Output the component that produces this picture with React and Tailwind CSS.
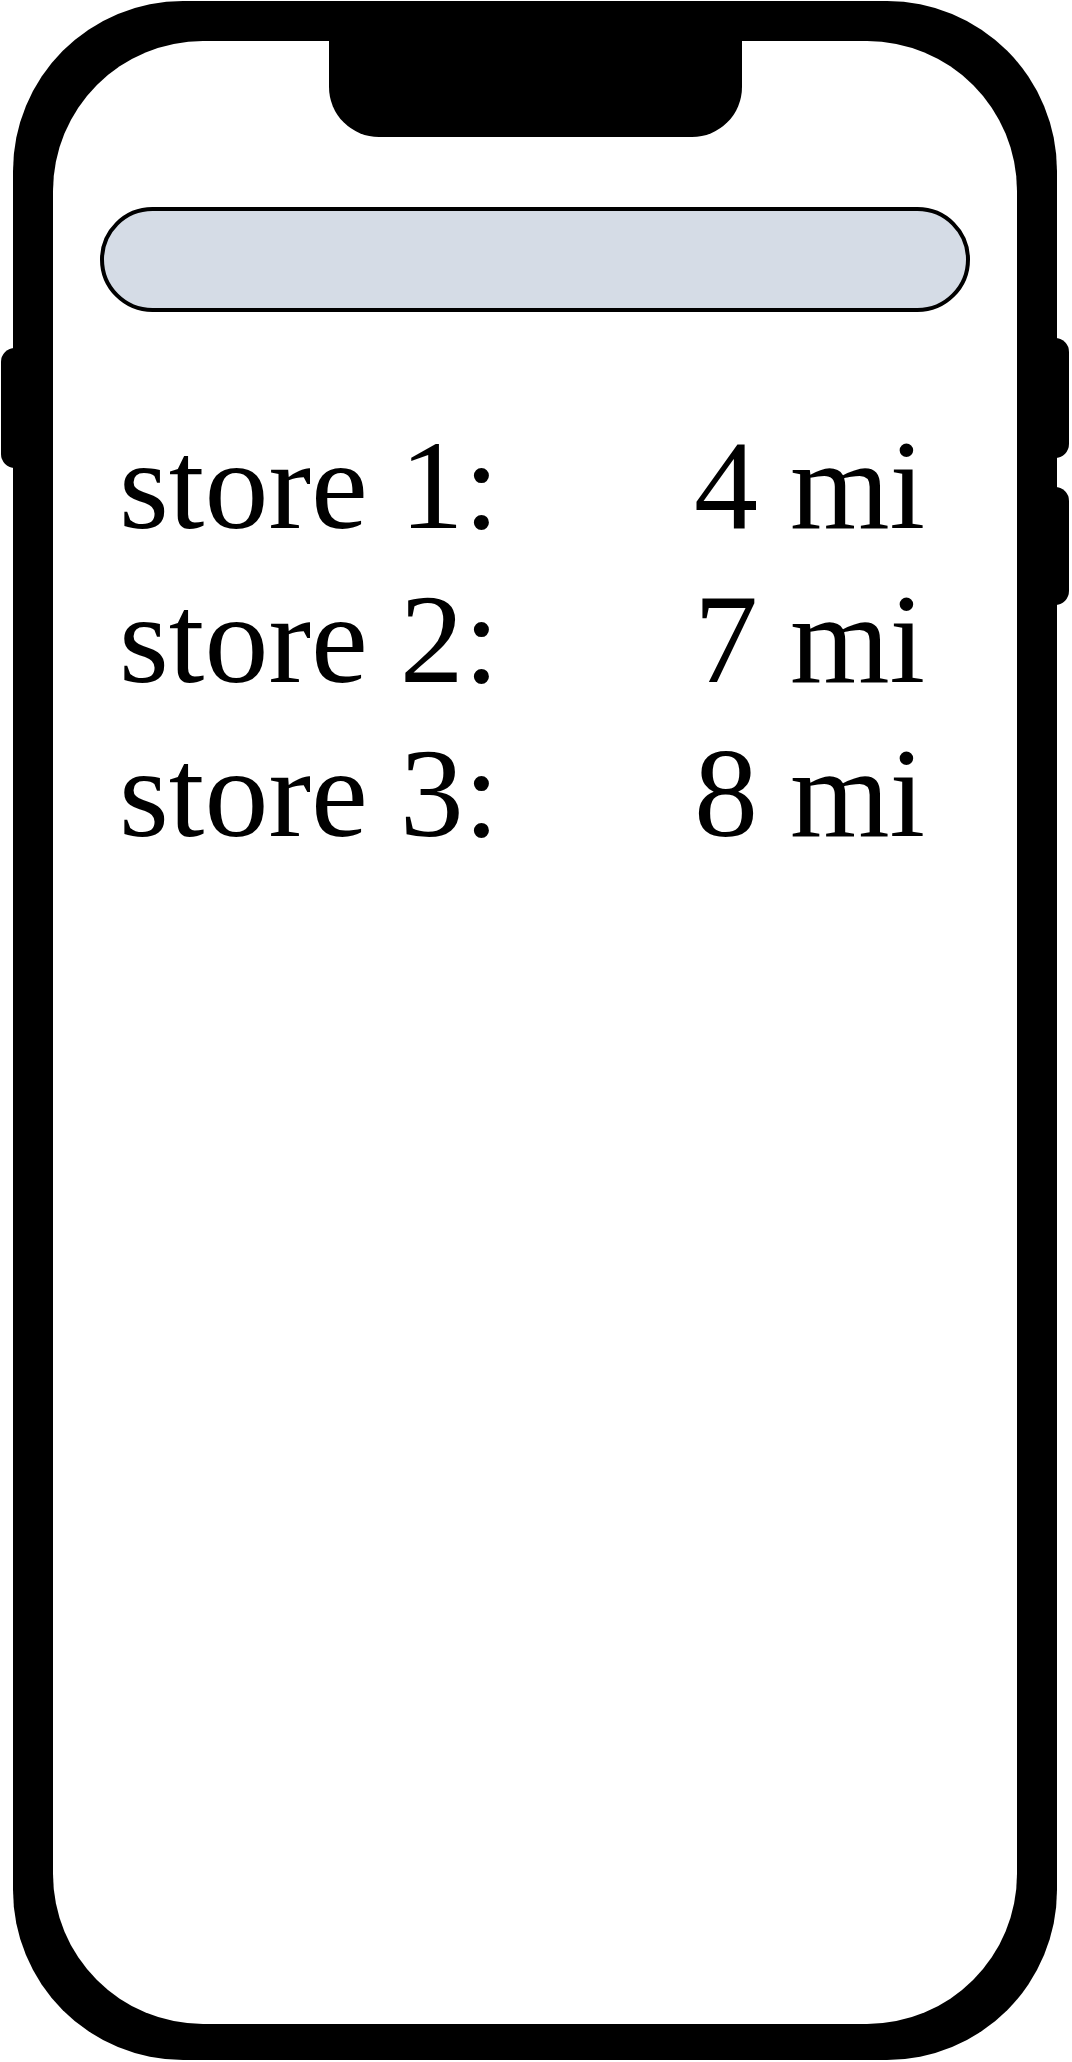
import React from "react";

const rows = [
  { name: "store 1:", dist: "4 mi" },
  { name: "store 2:", dist: "7 mi" },
  { name: "store 3:", dist: "8 mi" },
];

export default function App() {
  return (
    <div className="w-[1072px] h-[2062px] bg-white pl-[13px] pt-[1px]">
      <div className="relative w-[1044px] h-[2059px] bg-black rounded-[170px] pt-[40px] px-[40px] pb-[36px]">
        {/* side buttons */}
        <div className="absolute left-[-12px] top-[347px] w-[30px] h-[120px] bg-black rounded-[14px]" />
        <div className="absolute right-[-12px] top-[337px] w-[30px] h-[120px] bg-black rounded-[14px]" />
        <div className="absolute right-[-12px] top-[486px] w-[30px] h-[118px] bg-black rounded-[14px]" />

        <div className="h-full bg-white rounded-[150px] flex flex-col">
          {/* notch */}
          <div className="self-center w-[413px] h-[96px] shrink-0 bg-black rounded-b-[50px]" />

          <div className="mt-[70px] mx-[47px] h-[105px] shrink-0 rounded-full border-[4px] border-black bg-[#d5dce6]" />

          <div className="mt-[96px] pl-[66px] pr-[92px] flex flex-col font-['Liberation_Serif',serif] text-[128px] leading-[154px] text-black">
            {rows.map((r) => (
              <div key={r.name} className="flex justify-between whitespace-pre">
                <span>{r.name}</span>
                <span>{r.dist}</span>
              </div>
            ))}
          </div>
        </div>
      </div>
    </div>
  );
}
